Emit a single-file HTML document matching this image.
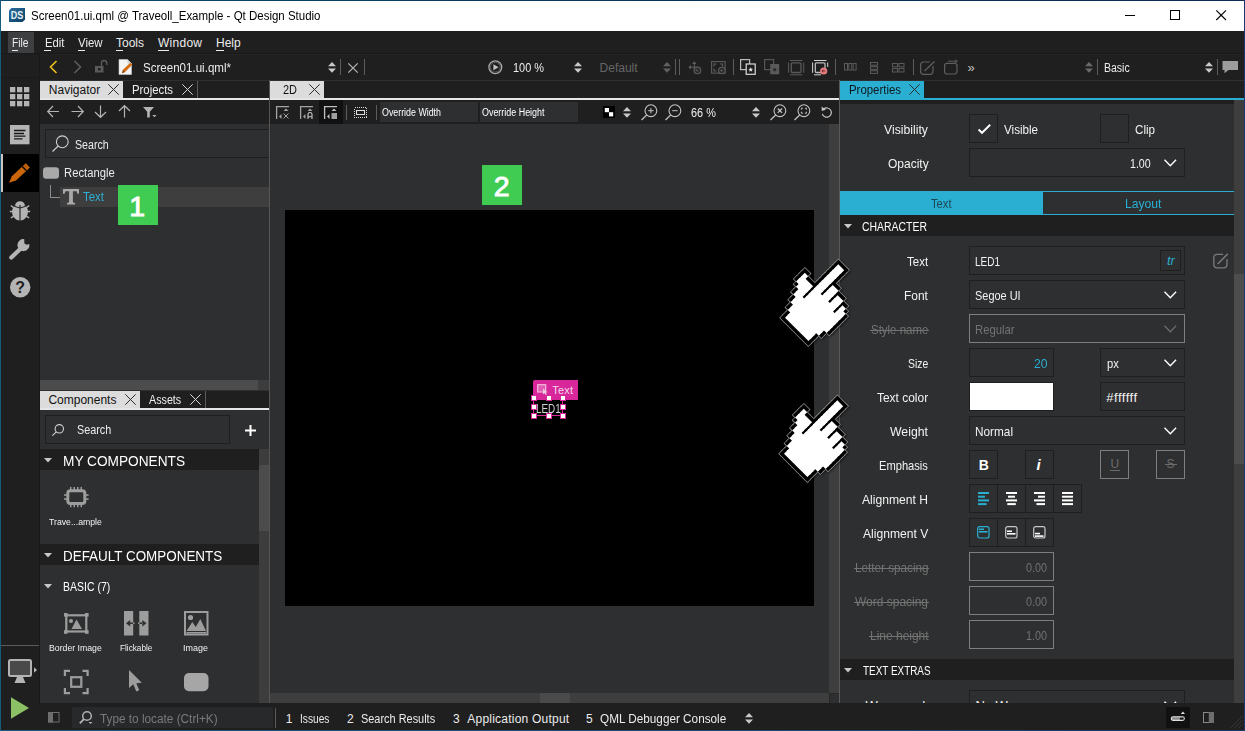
<!DOCTYPE html>
<html lang="en"><head><meta charset="utf-8"><title>Screen01.ui.qml @ Traveoll_Example - Qt Design Studio</title>
<style>
*{box-sizing:border-box;margin:0;padding:0}
html,body{width:1245px;height:731px;overflow:hidden;background:#1f1f1f}
body{position:relative;font-family:"Liberation Sans","DejaVu Sans",sans-serif;font-size:12px;color:#ececec}
.a{position:absolute}
.t{position:absolute;white-space:nowrap;line-height:1}
svg{position:absolute;overflow:visible}
</style></head>
<body>
<div class="a" style="left:0px;top:0px;width:1245px;height:731px;background:#1f1f1f;"></div>
<div class="a" style="left:1px;top:1px;width:1243px;height:30px;background:#ffffff;"></div>
<svg style="left:9px;top:8px;" width="16" height="14" viewBox="0 0 16 14"><defs><linearGradient id="dsg" x1="0" y1="0" x2="1" y2="1"><stop offset="0" stop-color="#2a6f9e"/><stop offset="1" stop-color="#0b3f63"/></linearGradient></defs><path d="M2.5 0H16V11.5L13.5 14H0V2.5Z" fill="url(#dsg)"/><text x="8" y="11" font-family="Liberation Sans, sans-serif" font-weight="700" font-size="10.500" text-anchor="middle" fill="#e8f1f7" textLength="12.500" lengthAdjust="spacingAndGlyphs">DS</text></svg>
<div class="t" style="left:30.50px;top:10.00px;font-size:12px;line-height:1;transform:scaleX(0.9576);transform-origin:0 0;color:#000;">Screen01.ui.qml @ Traveoll_Example - Qt Design Studio</div>
<svg style="left:1125px;top:9px;" width="12" height="12" viewBox="0 0 12 12"><path d="M0 6.5H10" stroke="#000" stroke-width="1" fill="none"/></svg>
<svg style="left:1170px;top:9px;" width="12" height="12" viewBox="0 0 12 12"><rect x="0.5" y="1.5" width="9" height="9" stroke="#000" stroke-width="1" fill="none"/></svg>
<svg style="left:1216px;top:9px;" width="12" height="12" viewBox="0 0 12 12"><path d="M0.3 1.3L10 11M10 1.3L0.3 11" stroke="#000" stroke-width="1.1" fill="none"/></svg>
<div class="a" style="left:8px;top:32px;width:26px;height:21px;background:#3e3f40;"></div>
<div class="t" style="left:12.30px;top:37.00px;font-size:12px;line-height:1;transform:scaleX(0.8534);transform-origin:0 0;color:#ececec;">File</div>
<div class="a" style="left:12px;top:50px;width:5.5px;height:1px;background:#ececec;"></div>
<div class="t" style="left:44.50px;top:37.00px;font-size:12px;line-height:1;transform:scaleX(0.9431);transform-origin:0 0;color:#ececec;">Edit</div>
<div class="a" style="left:44px;top:50px;width:6.5px;height:1px;background:#ececec;"></div>
<div class="t" style="left:78.00px;top:37.00px;font-size:12px;line-height:1;transform:scaleX(0.9499);transform-origin:0 0;color:#ececec;">View</div>
<div class="a" style="left:78px;top:50px;width:7px;height:1px;background:#ececec;"></div>
<div class="t" style="left:116.00px;top:37.00px;font-size:12px;line-height:1;color:#ececec;">Tools</div>
<div class="a" style="left:116px;top:50px;width:6.5px;height:1px;background:#ececec;"></div>
<div class="t" style="left:158.00px;top:37.00px;font-size:12px;line-height:1;letter-spacing:0.264px;color:#ececec;">Window</div>
<div class="a" style="left:158px;top:50px;width:10.5px;height:1px;background:#ececec;"></div>
<div class="t" style="left:216.00px;top:37.00px;font-size:12px;line-height:1;color:#ececec;">Help</div>
<div class="a" style="left:216px;top:50px;width:8px;height:1px;background:#ececec;"></div>
<div class="a" style="left:1px;top:53px;width:1243px;height:1px;background:#191919;"></div>
<div class="a" style="left:40px;top:54px;width:1204px;height:1px;background:#232323;"></div>
<div class="a" style="left:40px;top:80px;width:1204px;height:1px;background:#242424;"></div>
<svg style="left:49px;top:60px;" width="9" height="14" viewBox="0 0 9 14"><path d="M7.5 1L1.5 7L7.5 13" stroke="#edc11a" stroke-width="1.6" fill="none"/></svg>
<svg style="left:73px;top:60px;" width="9" height="14" viewBox="0 0 9 14"><path d="M1.5 1L7.5 7L1.5 13" stroke="#5e5e5e" stroke-width="1.6" fill="none"/></svg>
<svg style="left:95px;top:60px;" width="14" height="13" viewBox="0 0 14 13"><rect x="0" y="6" width="8.5" height="6.5" fill="#5a5a5a"/><rect x="3" y="8" width="2.5" height="2.5" fill="#1f1f1f"/><path d="M6.5 6V3.2A2.6 2.6 0 0 1 11.8 3.2V5" stroke="#5a5a5a" stroke-width="1.4" fill="none"/></svg>
<svg style="left:118px;top:59px;" width="16" height="17" viewBox="0 0 16 17"><path d="M1 0.5H9.5L13.5 4.5V15.5H1Z" fill="#f4f4f4" stroke="#c9c9c9" stroke-width="0.6"/><path d="M9.5 0.5V4.5H13.5" fill="#d0d0d0"/><path d="M4 14.2L5 10.8L12.3 3.8L14.2 5.7L7 12.9Z" fill="#d2690e"/><path d="M4 14.2L5 10.8L7 12.9Z" fill="#8a4a10"/></svg>
<div class="t" style="left:143.00px;top:62.00px;font-size:12px;line-height:1;transform:scaleX(0.9630);transform-origin:0 0;color:#ececec;">Screen01.ui.qml*</div>
<svg style="left:327.5px;top:61.6px;" width="8" height="11" viewBox="0 0 8 11"><path d="M0 4.2L4 0L8 4.2Z M0 6.6L4 10.8L8 6.6Z" fill="#c8c8c8"/></svg>
<div class="a" style="left:340px;top:59px;width:1px;height:16px;background:#5c5c5c;"></div>
<svg style="left:347.5px;top:62.5px;" width="10" height="10" viewBox="0 0 10 10"><path d="M0.3 0.3L9.7 9.7M9.7 0.3L0.3 9.7" stroke="#b8b8b8" stroke-width="1.2" fill="none"/></svg>
<div class="a" style="left:364px;top:59px;width:1px;height:16px;background:#5c5c5c;"></div>
<svg style="left:487.5px;top:60px;" width="15" height="15" viewBox="0 0 15 15"><circle cx="7.3" cy="7.2" r="6.4" stroke="#a8a8a8" stroke-width="1.3" fill="none"/><circle cx="7.3" cy="7.2" r="4.9" fill="none" stroke="#6a6a6a" stroke-width="0.8"/><path d="M5.4 4.2L10.6 7.2L5.4 10.2Z" fill="#c0c0c0"/></svg>
<div class="t" style="left:512.70px;top:62.00px;font-size:12px;line-height:1;transform:scaleX(0.9111);transform-origin:0 0;color:#ececec;">100 %</div>
<svg style="left:574.3px;top:61.6px;" width="8" height="11" viewBox="0 0 8 11"><path d="M0 4.2L4 0L8 4.2Z M0 6.6L4 10.8L8 6.6Z" fill="#c8c8c8"/></svg>
<div class="t" style="left:599.60px;top:62.00px;font-size:12px;line-height:1;color:#666;">Default</div>
<svg style="left:662.5px;top:61.6px;" width="8" height="11" viewBox="0 0 8 11"><path d="M0 4.2L4 0L8 4.2Z M0 6.6L4 10.8L8 6.6Z" fill="#606060"/></svg>
<div class="a" style="left:675px;top:59px;width:1px;height:16px;background:#5c5c5c;"></div>
<div class="a" style="left:679px;top:59px;width:1px;height:16px;background:#5c5c5c;"></div>
<svg style="left:688px;top:61px;" width="14" height="13" viewBox="0 0 14 13"><path d="M6.300 0.300L8.600 3H4Z M0.300 6.300L3 4V8.600Z" fill="#5c5c5c"/><path d="M6.300 2V10M2 6.300H9" stroke="#5c5c5c" stroke-width="1.100" fill="none"/><circle cx="9.4" cy="9.4" r="3.300" fill="#2a2a2a" stroke="#5c5c5c" stroke-width="1.100"/><path d="M8 9.4h2.600M8 9.4l1.300 -1.300M8 9.4l1.300 1.300" stroke="#5c5c5c" stroke-width=".800" fill="none"/></svg>
<svg style="left:710.5px;top:61px;" width="15" height="13" viewBox="0 0 15 13"><rect x="0.600" y="0.600" width="13.500" height="11.500" fill="none" stroke="#5c5c5c" stroke-width="1.100"/><path d="M3 5.500V3H5.500M9 3H11.500V5.500M3 7.500V10H5.500" stroke="#5c5c5c" stroke-width="1.100" fill="none"/><circle cx="10.9" cy="9.5" r="3.300" fill="#2a2a2a" stroke="#5c5c5c" stroke-width="1.100"/><path d="M9.5 9.5h2.600M9.5 9.5l1.300 -1.300M9.5 9.5l1.300 1.300" stroke="#5c5c5c" stroke-width=".800" fill="none"/></svg>
<div class="a" style="left:733px;top:59px;width:1px;height:16px;background:#5c5c5c;"></div>
<svg style="left:740px;top:59px;" width="16" height="16" viewBox="0 0 16 16"><rect x="0.6" y="0.6" width="9" height="10" fill="none" stroke="#bdbdbd" stroke-width="1.2"/><rect x="6.2" y="5" width="9" height="10.3" fill="#1f1f1f" stroke="#dcdcdc" stroke-width="1.2"/><path d="M10.7 8.2l.7 1.6 1.7.1-1.3 1.1.4 1.7-1.5-.9-1.5.9.4-1.7-1.3-1.1 1.7-.1z" fill="#e6e6e6"/></svg>
<svg style="left:764px;top:59px;" width="16" height="16" viewBox="0 0 16 16"><rect x="0.6" y="0.6" width="9" height="10" fill="none" stroke="#555" stroke-width="1.2"/><rect x="6.2" y="5" width="9" height="10.3" fill="#5a5a5a"/><path d="M10.7 8.2l.7 1.6 1.7.1-1.3 1.1.4 1.7-1.5-.9-1.5.9.4-1.7-1.3-1.1 1.7-.1z" fill="#2a2a2a"/></svg>
<svg style="left:787.5px;top:59.5px;" width="16" height="15" viewBox="0 0 16 15"><rect x="3.300" y="2.800" width="9.700" height="9.700" rx="1" fill="none" stroke="#5a5a5a" stroke-width="1.300"/><path d="M2 0.500H14.500M2 14.800H14.500M0.600 2.500V12.800M15.700 2.500V12.800" stroke="#5a5a5a" stroke-width="1" fill="none"/></svg>
<svg style="left:812px;top:59.5px;" width="16" height="15" viewBox="0 0 16 15"><rect x="3.300" y="2.800" width="9.700" height="9.700" rx="1" fill="none" stroke="#bcbcbc" stroke-width="1.300"/><path d="M2 0.500H14.500M2 14.800H9M0.600 2.500V12.800M15.700 2.500V7" stroke="#d4d4d4" stroke-width="1" fill="none"/><circle cx="11.700" cy="11" r="3.600" fill="#e57c7f"/><path d="M10 11h3.300M10 11l1.300 -1.300M10 11l1.300 1.300" stroke="#5a1f22" stroke-width=".800" fill="none"/></svg>
<div class="a" style="left:835px;top:59px;width:1px;height:16px;background:#5c5c5c;"></div>
<svg style="left:844px;top:63px;" width="13" height="8" viewBox="0 0 13 8"><rect x="0.5" y="0.5" width="3" height="6.5" fill="none" stroke="#5a5a5a"/><rect x="4.8" y="0.5" width="3" height="6.5" fill="none" stroke="#5a5a5a"/><rect x="9.1" y="0.5" width="3" height="6.5" fill="none" stroke="#5a5a5a"/></svg>
<svg style="left:869.5px;top:61.5px;" width="8" height="12" viewBox="0 0 8 12"><rect x="0.5" y="0.5" width="7" height="2.7" fill="none" stroke="#5a5a5a"/><rect x="0.5" y="4.6" width="7" height="2.7" fill="none" stroke="#5a5a5a"/><rect x="0.5" y="8.7" width="7" height="2.7" fill="none" stroke="#5a5a5a"/></svg>
<svg style="left:892px;top:62.5px;" width="13" height="10" viewBox="0 0 13 10"><rect x="0.5" y="0.5" width="5" height="3.4" fill="none" stroke="#5a5a5a"/><rect x="7" y="0.5" width="5" height="3.4" fill="none" stroke="#5a5a5a"/><rect x="0.5" y="5.6" width="5" height="3.4" fill="none" stroke="#5a5a5a"/><rect x="7" y="5.6" width="5" height="3.4" fill="none" stroke="#5a5a5a"/></svg>
<div class="a" style="left:913px;top:59px;width:1px;height:16px;background:#5c5c5c;"></div>
<svg style="left:920px;top:60.5px;" width="16" height="14" viewBox="0 0 16 14"><path d="M10 1H3.5A3 3 0 0 0 .6 4V10.5A3 3 0 0 0 3.5 13.4H10A3 3 0 0 0 13 10.5V5" stroke="#5e5e5e" stroke-width="1.2" fill="none"/><path d="M4.5 10L14.5 0.5" stroke="#5e5e5e" stroke-width="1.3"/></svg>
<svg style="left:944px;top:60px;" width="15" height="15" viewBox="0 0 15 15"><path d="M0.6 5V11.5A2.5 2.5 0 0 0 3.1 14H10.5A2.5 2.5 0 0 0 13 11.500V5A2.500 2.500 0 0 0 10.5 3.4H3.1A2.500 2.500 0 0 0 .6 5Z" stroke="#5e5e5e" stroke-width="1.2" fill="none"/><path d="M4 1.2H13M11 0L13.500 1.2L11 2.600" stroke="#5e5e5e" stroke-width="1" fill="none"/></svg>
<div class="t" style="left:967.50px;top:61.00px;font-size:13px;line-height:1;color:#c0c0c0;">»</div>
<svg style="left:1084.5px;top:61.6px;" width="8" height="11" viewBox="0 0 8 11"><path d="M0 4.2L4 0L8 4.2Z M0 6.6L4 10.8L8 6.6Z" fill="#6a6a6a"/></svg>
<div class="a" style="left:1097px;top:59px;width:1px;height:16px;background:#5c5c5c;"></div>
<div class="t" style="left:1103.70px;top:62.00px;font-size:12px;line-height:1;transform:scaleX(0.8758);transform-origin:0 0;color:#ececec;">Basic</div>
<svg style="left:1204.6px;top:61.6px;" width="8" height="11" viewBox="0 0 8 11"><path d="M0 4.2L4 0L8 4.2Z M0 6.6L4 10.8L8 6.6Z" fill="#c8c8c8"/></svg>
<div class="a" style="left:1217px;top:59px;width:1px;height:16px;background:#5c5c5c;"></div>
<svg style="left:1222px;top:60.5px;" width="17" height="13" viewBox="0 0 17 13"><path d="M0.500 0H16V9H6.500L2.500 12.200V9H0.500Z" fill="#9c9c9c"/></svg>
<div class="a" style="left:1px;top:54px;width:39px;height:676px;background:#1f1f1f;"></div>
<svg style="left:10px;top:87px;" width="20" height="20" viewBox="0 0 20 20"><rect x="0" y="0" width="5.3" height="5.3" fill="#b4b4b4"/><rect x="7" y="0" width="5.3" height="5.3" fill="#b4b4b4"/><rect x="14" y="0" width="5.3" height="5.3" fill="#b4b4b4"/><rect x="0" y="7" width="5.3" height="5.3" fill="#b4b4b4"/><rect x="7" y="7" width="5.3" height="5.3" fill="#b4b4b4"/><rect x="14" y="7" width="5.3" height="5.3" fill="#b4b4b4"/><rect x="0" y="14" width="5.3" height="5.3" fill="#b4b4b4"/><rect x="7" y="14" width="5.3" height="5.3" fill="#b4b4b4"/><rect x="14" y="14" width="5.3" height="5.3" fill="#b4b4b4"/></svg>
<svg style="left:10px;top:125px;" width="20" height="20" viewBox="0 0 20 20"><rect x="0" y="0" width="19.5" height="19.3" fill="#b4b4b4"/><path d="M4 5.500H15.500M4 8.500H14M4 11.200H15.500M4 13.800H12.500" stroke="#161616" stroke-width="1.300"/></svg>
<div class="a" style="left:1px;top:154px;width:38px;height:38px;background:#000;"></div>
<div class="a" style="left:39px;top:54px;width:1px;height:650px;background:#191919;"></div>
<div class="a" style="left:1px;top:77px;width:38px;height:1px;background:#1a1a1a;"></div>
<div class="a" style="left:1px;top:154px;width:2px;height:38px;background:#c8c6c5;"></div>
<svg style="left:8px;top:162px;" width="23" height="22" viewBox="0 0 23 22"><path d="M1 20.800L3.800 14.300L16.200 2.700L20.400 6.900L8 18.600Z" fill="#c9650b"/><path d="M14.300 4.500L18.500 8.700" stroke="#000" stroke-width="1.300"/><path d="M16.200 2.700L17.700 1.300L21.900 5.500L20.400 6.900Z" fill="#c9650b"/></svg>
<svg style="left:9px;top:200px;" width="22" height="21" viewBox="0 0 22 21"><ellipse cx="11" cy="12" rx="8" ry="8.600" fill="#b4b4b4"/><path d="M6.200 5A4.900 4.600 0 0 1 15.800 5Z" fill="#b4b4b4"/><path d="M11 5V20.800" stroke="#1f1f1f" stroke-width="1.100"/><path d="M5.200 6.300L11 8L16.800 6.300" stroke="#1f1f1f" stroke-width="1" fill="none"/><path d="M0.800 11.500H4M18 11.500H21.200M1.800 5.500L5 8M20.200 5.500L17 8M1.800 18L5 15.800M20.200 18L17 15.800" stroke="#b4b4b4" stroke-width="1.500"/></svg>
<svg style="left:9px;top:239px;" width="22" height="21" viewBox="0 0 22 21"><path d="M2.300 18.500L12.500 8.800" stroke="#b4b4b4" stroke-width="4.200" stroke-linecap="round"/><path d="M20.300 5A6 6 0 1 1 15.300 0.200L15.300 4.300L17.500 5.800L20.300 5Z" fill="#b4b4b4"/></svg>
<svg style="left:9.8px;top:276.6px;" width="21" height="21" viewBox="0 0 21 21"><circle cx="10.200" cy="10.200" r="10.200" fill="#b4b4b4"/><text x="10.200" y="15.800" text-anchor="middle" font-family="Liberation Sans, sans-serif" font-weight="700" font-size="16" fill="#1f1f1f">?</text></svg>
<div class="a" style="left:1px;top:645px;width:38px;height:1px;background:#5a5a5a;"></div>
<svg style="left:8px;top:659px;" width="30" height="25" viewBox="0 0 30 25"><rect x="1" y="1" width="22" height="16" rx="1.500" fill="#4a4a4a" stroke="#b4b4b4" stroke-width="2"/><path d="M9 18H15L17.500 24H6.500Z" fill="#b4b4b4"/><path d="M26 8.300L29 11L26 13.700Z" fill="#b4b4b4"/></svg>
<svg style="left:10.8px;top:697px;" width="18" height="22" viewBox="0 0 18 22"><path d="M0 0.300L18 11L0 21.700Z" fill="#8cc166"/></svg>
<div class="a" style="left:40px;top:80px;width:229px;height:310px;background:#2e2f30;"></div>
<div class="a" style="left:40px;top:81px;width:229px;height:18px;background:#1f1f1f;"></div>
<div class="a" style="left:40px;top:98px;width:229px;height:2px;background:#e6e6e6;"></div>
<div class="a" style="left:40px;top:81px;width:83px;height:17px;background:#dcdcdc;"></div>
<div class="t" style="left:48.80px;top:84.00px;font-size:12px;line-height:1;color:#111;">Navigator</div>
<svg style="left:108.3px;top:83.7px;" width="11" height="11" viewBox="0 0 11 11"><path d="M0.300 0.300L10.700 10.700M10.700 0.300L0.300 10.700" stroke="#2c2c2c" stroke-width="1" fill="none"/></svg>
<div class="a" style="left:197px;top:81px;width:1px;height:17px;background:#5a5a5a;"></div>
<div class="t" style="left:132.40px;top:84.00px;font-size:12px;line-height:1;transform:scaleX(0.9459);transform-origin:0 0;color:#f0f0f0;">Projects</div>
<svg style="left:182px;top:83.7px;" width="11" height="11" viewBox="0 0 11 11"><path d="M0.300 0.300L10.700 10.700M10.700 0.300L0.300 10.700" stroke="#d8d8d8" stroke-width="1" fill="none"/></svg>
<div class="a" style="left:40px;top:100px;width:229px;height:24px;background:#1f1f1f;"></div>
<svg style="left:47px;top:105px;" width="13" height="13" viewBox="0 0 13 13"><path d="M12 6.500H1M6 1L0.700 6.500L6 12" stroke="#b4b4b4" stroke-width="1.200" fill="none"/></svg>
<svg style="left:70.5px;top:105px;" width="13" height="13" viewBox="0 0 13 13"><path d="M0.500 6.500H12M7 1L12.300 6.500L7 12" stroke="#b4b4b4" stroke-width="1.200" fill="none"/></svg>
<svg style="left:94px;top:105px;" width="13" height="13" viewBox="0 0 13 13"><path d="M6.500 0.500V12M1 7L6.500 12.300L12 7" stroke="#b4b4b4" stroke-width="1.200" fill="none"/></svg>
<svg style="left:118px;top:105px;" width="13" height="13" viewBox="0 0 13 13"><path d="M6.500 12.500V1M1 6L6.500 0.700L12 6" stroke="#b4b4b4" stroke-width="1.200" fill="none"/></svg>
<svg style="left:142.5px;top:107px;" width="14" height="11" viewBox="0 0 14 11"><path d="M0 0H11L6.800 4.800V10.500H4.200V4.800Z" fill="#b4b4b4"/><path d="M9.300 8H13.500L11.400 10.300Z" fill="#b4b4b4"/></svg>
<div class="a" style="left:45px;top:129px;width:224px;height:29px;background:#2e2f30;border:1px solid #1f1f20;border-right:0;"></div>
<svg style="left:51.5px;top:134.5px;" width="18" height="17" viewBox="0 0 18 17"><circle cx="10.300" cy="6.800" r="5.900" stroke="#d0d0d0" stroke-width="1.100" fill="none"/><path d="M6.200 11L0.500 16.500" stroke="#d0d0d0" stroke-width="1.100"/></svg>
<div class="t" style="left:74.70px;top:138.75px;font-size:12.5px;line-height:1;transform:scaleX(0.8509);transform-origin:0 0;color:#ececec;">Search</div>
<svg style="left:43px;top:167px;" width="16" height="12" viewBox="0 0 16 12"><rect x="0" y="0.200" width="16" height="11.600" rx="3.200" fill="#a9a9a9"/></svg>
<div class="t" style="left:63.50px;top:166.75px;font-size:12.5px;line-height:1;transform:scaleX(0.9008);transform-origin:0 0;color:#ececec;">Rectangle</div>
<div class="a" style="left:50px;top:185px;width:1px;height:13px;background:#8c8c8c;"></div>
<div class="a" style="left:50px;top:197px;width:10px;height:1px;background:#8c8c8c;"></div>
<div class="a" style="left:60px;top:187px;width:209px;height:20px;background:#3e3e3e;"></div>
<svg style="left:63px;top:189px;" width="16" height="16" viewBox="0 0 16 16"><path d="M0 0H16V4.800H14.400L13.600 2.300H9.900V13.300L12 14V15.600H4V14L6.100 13.300V2.300H2.400L1.600 4.800H0Z" fill="#a9a9a9"/></svg>
<div class="t" style="left:83.40px;top:190.75px;font-size:12.5px;line-height:1;transform:scaleX(0.9074);transform-origin:0 0;color:#2aafd3;">Text</div>
<div class="a" style="left:118px;top:185px;width:40px;height:40px;background:#40cb52;"></div>
<div class="t" style="left:129.28px;top:191.75px;font-size:28.5px;line-height:1;color:#fff;-webkit-text-stroke:0.9px #fff;">1</div>
<div class="a" style="left:40px;top:380px;width:229px;height:10px;background:#3d3d3d;"></div>
<div class="a" style="left:40px;top:380px;width:218px;height:10px;background:#4c4c4c;"></div>
<div class="a" style="left:40px;top:390px;width:229px;height:313px;background:#2e2f30;"></div>
<div class="a" style="left:40px;top:391px;width:229px;height:18px;background:#1f1f1f;"></div>
<div class="a" style="left:40px;top:408px;width:229px;height:2px;background:#e6e6e6;"></div>
<div class="a" style="left:40px;top:391px;width:100px;height:17px;background:#dcdcdc;"></div>
<div class="t" style="left:48.40px;top:394.00px;font-size:12px;line-height:1;color:#111;">Components</div>
<svg style="left:125.3px;top:393.7px;" width="11" height="11" viewBox="0 0 11 11"><path d="M0.300 0.300L10.700 10.700M10.700 0.300L0.300 10.700" stroke="#2c2c2c" stroke-width="1" fill="none"/></svg>
<div class="a" style="left:205px;top:391px;width:1px;height:17px;background:#5a5a5a;"></div>
<div class="t" style="left:149.00px;top:394.00px;font-size:12px;line-height:1;transform:scaleX(0.8942);transform-origin:0 0;color:#f0f0f0;">Assets</div>
<svg style="left:190.2px;top:393.7px;" width="11" height="11" viewBox="0 0 11 11"><path d="M0.300 0.300L10.700 10.700M10.700 0.300L0.300 10.700" stroke="#d8d8d8" stroke-width="1" fill="none"/></svg>
<div class="a" style="left:45px;top:415px;width:185px;height:29px;background:#2e2f30;border:1px solid #1f1f20;"></div>
<svg style="left:52px;top:424px;" width="12" height="12" viewBox="0 0 12 12"><circle cx="7.300" cy="4.800" r="4.200" stroke="#d0d0d0" stroke-width="1.100" fill="none"/><path d="M4.300 7.800L0.400 11.700" stroke="#d0d0d0" stroke-width="1.100"/></svg>
<div class="t" style="left:77.10px;top:423.75px;font-size:12.5px;line-height:1;transform:scaleX(0.8636);transform-origin:0 0;color:#ececec;">Search</div>
<svg style="left:244.5px;top:425px;" width="11" height="11" viewBox="0 0 11 11"><path d="M5.500 0V11M0 5.500H11" stroke="#fff" stroke-width="2"/></svg>
<div class="a" style="left:40px;top:449px;width:219px;height:21px;background:#1f1f1f;"></div>
<svg style="left:44.3px;top:457.8px;" width="8" height="5" viewBox="0 0 8 5"><path d="M0 0H8L4 4.600Z" fill="#c8c8c8"/></svg>
<div class="t" style="left:62.50px;top:454.00px;font-size:14px;line-height:1;transform:scaleX(0.9762);transform-origin:0 0;color:#fff;">MY COMPONENTS</div>
<div class="a" style="left:259px;top:449px;width:10px;height:254px;background:#3d3d3d;"></div>
<div class="a" style="left:259px;top:465px;width:10px;height:65.5px;background:#4c4c4c;"></div>
<svg style="left:63.7px;top:487px;" width="25" height="21" viewBox="0 0 25 21"><rect x="3.800" y="3.800" width="17" height="12.600" rx="2.500" fill="none" stroke="#9d9d9d" stroke-width="3"/><rect x="6.0" y="0" width="1.500" height="3" fill="#9d9d9d"/><rect x="6.0" y="17.200" width="1.500" height="3" fill="#9d9d9d"/><rect x="9.5" y="0" width="1.500" height="3" fill="#9d9d9d"/><rect x="9.5" y="17.200" width="1.500" height="3" fill="#9d9d9d"/><rect x="13.0" y="0" width="1.500" height="3" fill="#9d9d9d"/><rect x="13.0" y="17.200" width="1.500" height="3" fill="#9d9d9d"/><rect x="16.5" y="0" width="1.500" height="3" fill="#9d9d9d"/><rect x="16.5" y="17.200" width="1.500" height="3" fill="#9d9d9d"/><rect x="0" y="7.3" width="3" height="1.500" fill="#9d9d9d"/><rect x="21.600" y="7.3" width="3" height="1.500" fill="#9d9d9d"/><rect x="0" y="11.3" width="3" height="1.500" fill="#9d9d9d"/><rect x="21.600" y="11.3" width="3" height="1.500" fill="#9d9d9d"/></svg>
<div class="t" style="left:49.40px;top:516.75px;font-size:9.5px;line-height:1;transform:scaleX(0.9148);transform-origin:0 0;color:#f2f2f2;">Trave...ample</div>
<div class="a" style="left:40px;top:544px;width:219px;height:21px;background:#1f1f1f;"></div>
<svg style="left:44.3px;top:552.5px;" width="8" height="5" viewBox="0 0 8 5"><path d="M0 0H8L4 4.600Z" fill="#c8c8c8"/></svg>
<div class="t" style="left:62.50px;top:549.00px;font-size:14px;line-height:1;transform:scaleX(0.9593);transform-origin:0 0;color:#fff;">DEFAULT COMPONENTS</div>
<svg style="left:44.3px;top:584px;" width="8" height="5" viewBox="0 0 8 5"><path d="M0 0H8L4 4.600Z" fill="#c8c8c8"/></svg>
<div class="t" style="left:62.50px;top:581.00px;font-size:12px;line-height:1;transform:scaleX(0.8739);transform-origin:0 0;color:#fff;">BASIC (7)</div>
<svg style="left:63.7px;top:612.6px;" width="25" height="21" viewBox="0 0 25 21"><rect x="2.300" y="2.300" width="20" height="16.200" fill="none" stroke="#9d9d9d" stroke-width="2.200"/><rect x="0" y="0" width="3.600" height="3.600" fill="#9d9d9d"/><rect x="21" y="0" width="3.600" height="3.600" fill="#9d9d9d"/><rect x="0" y="17.2" width="3.600" height="3.600" fill="#9d9d9d"/><rect x="21" y="17.2" width="3.600" height="3.600" fill="#9d9d9d"/><circle cx="7" cy="8" r="2" fill="#9d9d9d"/><path d="M7.500 16L12.500 6.500L18 16Z" fill="#9d9d9d"/></svg>
<svg style="left:124px;top:610.8px;" width="25" height="25" viewBox="0 0 25 25"><rect x="0" y="0" width="9.200" height="24.500" fill="#9d9d9d"/><rect x="15.300" y="0" width="9.200" height="24.500" fill="#9d9d9d"/><path d="M2 12.200L6.200 9V15.400Z M22.500 12.200L18.300 9V15.400Z" fill="#2e2f30"/><path d="M6 12.200H10.500M14 12.200H18.500" stroke="#9d9d9d" stroke-width="1.400"/><path d="M6 12.200H9M15.500 12.200H18.500" stroke="#2e2f30" stroke-width="1.400"/></svg>
<svg style="left:183.8px;top:610.8px;" width="25" height="25" viewBox="0 0 25 25"><rect x="1" y="1" width="22.500" height="22.500" fill="none" stroke="#9d9d9d" stroke-width="2"/><circle cx="6.500" cy="6.500" r="2.600" fill="#9d9d9d"/><path d="M2.500 20L8.300 11L11.800 16L16.300 8L22 20Z" fill="#9d9d9d"/><rect x="2.500" y="21" width="19.500" height="1.400" fill="#9d9d9d"/></svg>
<div class="t" style="left:49.40px;top:642.75px;font-size:9.5px;line-height:1;transform:scaleX(0.9174);transform-origin:0 0;color:#f2f2f2;">Border Image</div>
<div class="t" style="left:119.70px;top:642.75px;font-size:9.5px;line-height:1;transform:scaleX(0.8617);transform-origin:0 0;color:#f2f2f2;">Flickable</div>
<div class="t" style="left:183.40px;top:642.75px;font-size:9.5px;line-height:1;transform:scaleX(0.9431);transform-origin:0 0;color:#f2f2f2;">Image</div>
<svg style="left:63.7px;top:669.8px;" width="25" height="24" viewBox="0 0 25 24"><path d="M0.900 6V0.900H6M18.500 0.900H23.600V6M0.900 18V23.100H6M18.500 23.100H23.600V18" stroke="#9d9d9d" stroke-width="2.200" fill="none"/><rect x="7.200" y="7.200" width="10.100" height="9.600" fill="none" stroke="#9d9d9d" stroke-width="2.200"/></svg>
<svg style="left:129.4px;top:670.4px;" width="13" height="23" viewBox="0 0 13 23"><path d="M0 0V18L4.300 14.300L7.300 21.500L10.300 20.300L7.300 13.300L12.800 12.800Z" fill="#9d9d9d"/></svg>
<svg style="left:183.8px;top:672.8px;" width="25" height="19" viewBox="0 0 25 19"><rect x="0" y="0" width="24.500" height="18.300" rx="5" fill="#a6a6a6"/></svg>
<div class="a" style="left:269px;top:80px;width:1px;height:623px;background:#555555;"></div>
<div class="a" style="left:270px;top:80px;width:569px;height:623px;background:#2e2f30;"></div>
<div class="a" style="left:270px;top:81px;width:569px;height:18px;background:#1f1f1f;"></div>
<div class="a" style="left:270px;top:98px;width:569px;height:2px;background:#e6e6e6;"></div>
<div class="a" style="left:270px;top:81px;width:54px;height:17px;background:#dcdcdc;"></div>
<div class="t" style="left:282.50px;top:84.00px;font-size:12px;line-height:1;transform:scaleX(0.9127);transform-origin:0 0;color:#111;">2D</div>
<svg style="left:309px;top:83.7px;" width="11" height="11" viewBox="0 0 11 11"><path d="M0.300 0.300L10.700 10.700M10.700 0.300L0.300 10.700" stroke="#2c2c2c" stroke-width="1" fill="none"/></svg>
<div class="a" style="left:270px;top:100px;width:569px;height:24px;background:#1f1f1f;"></div>
<svg style="left:275.5px;top:106px;" width="14" height="13" viewBox="0 0 14 13"><path d="M0.600 13V0.600H13" stroke="#a4a4a4" stroke-width="1.300" fill="none"/><path d="M3 10.500L5.500 8V13Z" fill="#a4a4a4"/><path d="M10 2.500L7.500 5H12.500Z" fill="#a4a4a4"/><path d="M7.500 7.500L12.500 12.500M12.500 7.500L7.500 12.500" stroke="#a4a4a4" stroke-width="1"/></svg>
<svg style="left:299.5px;top:106px;" width="14" height="13" viewBox="0 0 14 13"><path d="M0.600 13V0.600H13" stroke="#a4a4a4" stroke-width="1.300" fill="none"/><path d="M3 10.500L5.500 8V13Z" fill="#a4a4a4"/><path d="M10 2.500L7.500 5H12.500Z" fill="#a4a4a4"/><path d="M8 13V8.500A2 2 0 0 1 12 8.500V13M8 10.800H12" stroke="#c8c8c8" stroke-width="1.100" fill="none"/></svg>
<div class="a" style="left:319px;top:100px;width:24px;height:24px;background:#111112;"></div>
<svg style="left:323.5px;top:106px;" width="14" height="13" viewBox="0 0 14 13"><path d="M0.600 13V0.600H13" stroke="#c0c0c0" stroke-width="1.300" fill="none"/><path d="M3 10.500L5.500 8V13Z" fill="#c0c0c0"/><path d="M10 2.500L7.500 5H12.500Z" fill="#c0c0c0"/><rect x="7.500" y="7" width="5.500" height="6" fill="#a0a0a0"/></svg>
<div class="a" style="left:346px;top:105px;width:1px;height:15px;background:#5c5c5c;"></div>
<svg style="left:354px;top:107px;" width="14" height="12" viewBox="0 0 14 12"><rect x="0.500" y="0.500" width="12" height="10" fill="none" stroke="#d8d8d8" stroke-width="1" stroke-dasharray="1 1" shape-rendering="crispEdges"/><rect x="2.500" y="3.500" width="8" height="4" fill="none" stroke="#e0e0e0" stroke-width="1" shape-rendering="crispEdges"/></svg>
<div class="a" style="left:376px;top:105px;width:1px;height:15px;background:#5c5c5c;"></div>
<div class="a" style="left:380px;top:102px;width:98px;height:20px;background:#2e2f30;"></div>
<div class="a" style="left:480px;top:102px;width:98px;height:20px;background:#2e2f30;"></div>
<div class="t" style="left:382.30px;top:107.50px;font-size:10px;line-height:1;transform:scaleX(0.8848);transform-origin:0 0;color:#fff;">Override Width</div>
<div class="t" style="left:482.30px;top:107.50px;font-size:10px;line-height:1;transform:scaleX(0.8925);transform-origin:0 0;color:#fff;">Override Height</div>
<svg style="left:603px;top:106px;" width="12" height="12" viewBox="0 0 12 12"><rect x="0" y="0" width="12" height="12" fill="#000"/><rect x="1.800" y="2" width="4.200" height="4.200" fill="#fff"/><rect x="6" y="6.200" width="4.200" height="4.200" fill="#fff"/></svg>
<svg style="left:623px;top:106.5px;" width="8" height="11" viewBox="0 0 8 11"><path d="M0 4.2L4 0L8 4.2Z M0 6.6L4 10.8L8 6.6Z" fill="#c8c8c8"/></svg>
<svg style="left:640.5px;top:104.5px;" width="17" height="16" viewBox="0 0 17 16"><circle cx="9.900" cy="5.700" r="5.900" stroke="#c4c4c4" stroke-width="1.100" fill="none"/><path d="M5.700 10L0.500 15" stroke="#c4c4c4" stroke-width="1.200"/><path d="M7.200 5.700H12.600M9.900 3V8.400" stroke="#c4c4c4" stroke-width="1"/></svg>
<svg style="left:664.5px;top:104.5px;" width="17" height="16" viewBox="0 0 17 16"><circle cx="9.900" cy="5.700" r="5.900" stroke="#c4c4c4" stroke-width="1.100" fill="none"/><path d="M5.700 10L0.500 15" stroke="#c4c4c4" stroke-width="1.200"/><path d="M7.200 5.700H12.600" stroke="#c4c4c4" stroke-width="1"/></svg>
<div class="t" style="left:690.50px;top:107.00px;font-size:12px;line-height:1;transform:scaleX(0.9067);transform-origin:0 0;color:#ececec;">66 %</div>
<svg style="left:752.4px;top:106.5px;" width="8" height="11" viewBox="0 0 8 11"><path d="M0 4.2L4 0L8 4.2Z M0 6.6L4 10.8L8 6.6Z" fill="#c8c8c8"/></svg>
<svg style="left:770px;top:104.5px;" width="17" height="16" viewBox="0 0 17 16"><circle cx="9.900" cy="5.700" r="5.900" stroke="#c4c4c4" stroke-width="1.100" fill="none"/><path d="M5.700 10L0.500 15" stroke="#c4c4c4" stroke-width="1.200"/><path d="M7.700 3.500L12.100 7.900M12.100 3.500L7.700 7.900" stroke="#c4c4c4" stroke-width="1.200"/><rect x="8.900" y="4.700" width="2" height="2" fill="#c4c4c4"/></svg>
<svg style="left:794px;top:104.5px;" width="17" height="16" viewBox="0 0 17 16"><circle cx="9.900" cy="5.700" r="5.900" stroke="#c4c4c4" stroke-width="1.100" fill="none"/><path d="M5.700 10L0.500 15" stroke="#c4c4c4" stroke-width="1.200"/><path d="M7.400 4.700V3.200H8.900M10.900 3.200H12.400V4.700M7.400 6.700V8.200H8.900M10.900 8.200H12.400V6.700" stroke="#c4c4c4" stroke-width="1" fill="none"/></svg>
<svg style="left:820.5px;top:106px;" width="12" height="12" viewBox="0 0 12 12"><path d="M2.600 3.200A4.600 4.600 0 1 1 1.300 7.800" stroke="#c4c4c4" stroke-width="1.200" fill="none"/><path d="M0.600 0.600L0.800 4.900L4.900 3.700Z" fill="#c4c4c4"/></svg>
<div class="a" style="left:829px;top:124px;width:10px;height:569px;background:#3e3e3e;"></div>
<div class="a" style="left:270px;top:693px;width:559px;height:10px;background:#3e3e3e;"></div>
<div class="a" style="left:540px;top:693px;width:30px;height:10px;background:#4a4a4a;"></div>
<div class="a" style="left:829px;top:693px;width:10px;height:10px;background:#2e2f30;border-top:1px solid #252626;border-left:1px solid #252626;"></div>
<div class="a" style="left:285px;top:210px;width:529px;height:396px;background:#000;"></div>
<div class="a" style="left:482px;top:165px;width:40px;height:40px;background:#40cb52;"></div>
<div class="t" style="left:493.68px;top:171.75px;font-size:28.5px;line-height:1;color:#fff;-webkit-text-stroke:0.9px #fff;">2</div>
<div class="a" style="left:533px;top:380px;width:45px;height:20px;background:#d8279a;border-radius:2px 0 0 0;"></div>
<svg style="left:536.5px;top:384px;" width="11" height="11" viewBox="0 0 11 11"><rect x="0.700" y="0.700" width="8" height="7.300" fill="rgba(255,255,255,.25)" stroke="#f0b9dc" stroke-width="1.200"/><path d="M6 4.500V10.500L7.600 9.200L8.800 11L9.800 10.400L8.800 8.600L10.500 8.300Z" fill="#eec6e0"/></svg>
<div class="t" style="left:552.30px;top:384.50px;font-size:11px;line-height:1;letter-spacing:0.176px;color:#f3d6e9;">Text</div>
<div class="t" style="left:535.90px;top:403.00px;font-size:12px;line-height:1;transform:scaleX(0.8229);transform-origin:0 0;color:#d4d4d4;">LED1</div>
<div class="a" style="left:533px;top:397px;width:30px;height:19px;border:1px solid #d8279a;"></div>
<div class="a" style="left:531px;top:395px;width:5.5px;height:5.5px;background:#fff;border:1px solid #d8279a;"></div>
<div class="a" style="left:531px;top:404px;width:5.5px;height:5.5px;background:#fff;border:1px solid #d8279a;"></div>
<div class="a" style="left:531px;top:413px;width:5.5px;height:5.5px;background:#fff;border:1px solid #d8279a;"></div>
<div class="a" style="left:546px;top:395px;width:5.5px;height:5.5px;background:#fff;border:1px solid #d8279a;"></div>
<div class="a" style="left:546px;top:413px;width:5.5px;height:5.5px;background:#fff;border:1px solid #d8279a;"></div>
<div class="a" style="left:560px;top:395px;width:5.5px;height:5.5px;background:#fff;border:1px solid #d8279a;"></div>
<div class="a" style="left:560px;top:404px;width:5.5px;height:5.5px;background:#fff;border:1px solid #d8279a;"></div>
<div class="a" style="left:560px;top:413px;width:5.5px;height:5.5px;background:#fff;border:1px solid #d8279a;"></div>
<div class="a" style="left:839px;top:80px;width:1px;height:623px;background:#5a5a5a;"></div>
<div class="a" style="left:840px;top:80px;width:404px;height:623px;background:#2e2f30;"></div>
<div class="a" style="left:840px;top:81px;width:404px;height:18px;background:#1f1f1f;"></div>
<div class="a" style="left:840px;top:98px;width:404px;height:2px;background:#2aafd3;"></div>
<div class="a" style="left:840px;top:81px;width:84px;height:17px;background:#2aafd3;"></div>
<div class="t" style="left:848.50px;top:84.00px;font-size:12px;line-height:1;transform:scaleX(0.9508);transform-origin:0 0;color:#0e181c;">Properties</div>
<svg style="left:909.2px;top:83.7px;" width="11" height="11" viewBox="0 0 11 11"><path d="M0.300 0.300L10.700 10.700M10.700 0.300L0.300 10.700" stroke="#2c2c2c" stroke-width="1" fill="none"/></svg>
<div class="a" style="left:840px;top:100px;width:394px;height:4px;background:#1f1f1f;"></div>
<div class="a" style="left:1234px;top:100px;width:10px;height:603px;background:#3e3e3e;"></div>
<div class="a" style="left:1234px;top:274px;width:10px;height:189.5px;background:#4d4d4d;"></div>
<div class="t" style="left:884.30px;top:123.00px;font-size:13px;line-height:1;transform:scaleX(0.9397);transform-origin:0 0;color:#f2f2f2;">Visibility</div>
<div class="a" style="left:969px;top:114px;width:29px;height:29px;background:#2e2f30;border:1px solid #1f1f20;"></div>
<svg style="left:977.5px;top:123.5px;" width="13" height="10" viewBox="0 0 13 10"><path d="M0.600 5.500L4 8.800L12.200 0.800" stroke="#fff" stroke-width="1.900" fill="none"/></svg>
<div class="t" style="left:1004.10px;top:123.00px;font-size:13px;line-height:1;transform:scaleX(0.8960);transform-origin:0 0;color:#f2f2f2;">Visible</div>
<div class="a" style="left:1100px;top:114px;width:29px;height:29px;background:#2e2f30;border:1px solid #1f1f20;"></div>
<div class="t" style="left:1135.00px;top:123.00px;font-size:13px;line-height:1;transform:scaleX(0.8931);transform-origin:0 0;color:#f2f2f2;">Clip</div>
<div class="t" style="left:887.50px;top:157.00px;font-size:13px;line-height:1;transform:scaleX(0.9235);transform-origin:0 0;color:#f2f2f2;">Opacity</div>
<div class="a" style="left:969px;top:148px;width:216px;height:29px;background:#2e2f30;border:1px solid #1f1f20;"></div>
<div class="t" style="left:1129.80px;top:157.00px;font-size:13px;line-height:1;transform:scaleX(0.8182);transform-origin:0 0;color:#f2f2f2;">1.00</div>
<svg style="left:1164px;top:159px;" width="13" height="8" viewBox="0 0 13 8"><path d="M0.500 0.700L6.300 6.700L12.100 0.700" stroke="#fff" stroke-width="1.350" fill="none"/></svg>
<div class="a" style="left:840px;top:191px;width:203px;height:24px;background:#2aafd3;"></div>
<div class="a" style="left:1043px;top:191px;width:191px;height:24px;background:#2e2f30;border-top:1px solid #2aafd3;border-bottom:1px solid #2aafd3;"></div>
<div class="t" style="left:930.80px;top:197.00px;font-size:13px;line-height:1;transform:scaleX(0.8599);transform-origin:0 0;color:#1f4654;">Text</div>
<div class="t" style="left:1124.55px;top:197.00px;font-size:13px;line-height:1;transform:scaleX(0.9352);transform-origin:0 0;color:#2aafd3;">Layout</div>
<div class="a" style="left:840px;top:215px;width:394px;height:21px;background:#1f1f1f;"></div>
<svg style="left:844.4px;top:224.3px;" width="8" height="5" viewBox="0 0 8 5"><path d="M0 0H8L4 4.600Z" fill="#c8c8c8"/></svg>
<div class="t" style="left:862.10px;top:220.75px;font-size:12.5px;line-height:1;transform:scaleX(0.8356);transform-origin:0 0;color:#fff;">CHARACTER</div>
<div class="t" style="left:907.10px;top:255.00px;font-size:13px;line-height:1;transform:scaleX(0.8850);transform-origin:0 0;color:#f2f2f2;">Text</div>
<div class="a" style="left:969px;top:246px;width:216px;height:29px;background:#2e2f30;border:1px solid #1f1f20;"></div>
<div class="t" style="left:975.40px;top:255.00px;font-size:13px;line-height:1;transform:scaleX(0.7688);transform-origin:0 0;color:#f2f2f2;">LED1</div>
<div class="a" style="left:1160px;top:250px;width:21px;height:21px;background:#2e2f30;border:1px solid #1f1f20;"></div>
<div class="t" style="left:1166.90px;top:254.00px;font-size:13px;line-height:1;color:#2aafd3;font-style:italic;">tr</div>
<svg style="left:1213px;top:252.5px;" width="16" height="16" viewBox="0 0 16 16"><path d="M10 1.300H3.800A3 3 0 0 0 .8 4.300V11.800A3 3 0 0 0 3.800 14.800H11A3 3 0 0 0 14 11.800V6" stroke="#7c7c7c" stroke-width="1.300" fill="none"/><path d="M4.800 11L14.800 0.800" stroke="#7c7c7c" stroke-width="1.500"/></svg>
<div class="t" style="left:904.30px;top:289.00px;font-size:13px;line-height:1;transform:scaleX(0.9189);transform-origin:0 0;color:#f2f2f2;">Font</div>
<div class="a" style="left:969px;top:280px;width:216px;height:29px;background:#2e2f30;border:1px solid #1f1f20;"></div>
<div class="t" style="left:975.40px;top:289.00px;font-size:13px;line-height:1;transform:scaleX(0.8413);transform-origin:0 0;color:#f2f2f2;">Segoe UI</div>
<svg style="left:1164px;top:291px;" width="13" height="8" viewBox="0 0 13 8"><path d="M0.500 0.700L6.300 6.700L12.100 0.700" stroke="#fff" stroke-width="1.350" fill="none"/></svg>
<div class="t" style="left:870.90px;top:323.00px;font-size:13px;line-height:1;transform:scaleX(0.8812);transform-origin:0 0;color:#737373;">Style name</div>
<div class="a" style="left:869.9000000000001px;top:329.5px;width:59.3px;height:1px;background:#737373;"></div>
<div class="a" style="left:969px;top:314px;width:216px;height:29px;background:#2e2f30;border:1px solid #7e7e7e;"></div>
<div class="t" style="left:975.40px;top:323.00px;font-size:13px;line-height:1;transform:scaleX(0.8699);transform-origin:0 0;color:#737373;">Regular</div>
<svg style="left:1164px;top:325px;" width="13" height="8" viewBox="0 0 13 8"><path d="M0.500 0.700L6.300 6.700L12.100 0.700" stroke="#6c6c6c" stroke-width="1.350" fill="none"/></svg>
<div class="t" style="left:908.00px;top:357.00px;font-size:13px;line-height:1;transform:scaleX(0.7988);transform-origin:0 0;color:#f2f2f2;">Size</div>
<div class="a" style="left:969px;top:348px;width:85px;height:29px;background:#2e2f30;border:1px solid #1f1f20;"></div>
<div class="t" style="left:1033.80px;top:357.00px;font-size:13px;line-height:1;transform:scaleX(0.9337);transform-origin:0 0;color:#2aafd3;">20</div>
<div class="a" style="left:1100px;top:348px;width:85px;height:29px;background:#2e2f30;border:1px solid #1f1f20;"></div>
<div class="t" style="left:1106.70px;top:357.00px;font-size:13px;line-height:1;transform:scaleX(0.8595);transform-origin:0 0;color:#f2f2f2;">px</div>
<svg style="left:1164px;top:359px;" width="13" height="8" viewBox="0 0 13 8"><path d="M0.500 0.700L6.300 6.700L12.100 0.700" stroke="#fff" stroke-width="1.350" fill="none"/></svg>
<div class="t" style="left:877.10px;top:391.00px;font-size:13px;line-height:1;transform:scaleX(0.9186);transform-origin:0 0;color:#f2f2f2;">Text color</div>
<div class="a" style="left:969px;top:382px;width:85px;height:29px;background:#fff;border:1px solid #1f1f20;"></div>
<div class="a" style="left:1100px;top:382px;width:85px;height:29px;background:#2e2f30;border:1px solid #1f1f20;"></div>
<div class="t" style="left:1106.30px;top:391.00px;font-size:13px;line-height:1;letter-spacing:0.497px;color:#f2f2f2;">#ffffff</div>
<div class="t" style="left:890.30px;top:425.00px;font-size:13px;line-height:1;transform:scaleX(0.9423);transform-origin:0 0;color:#f2f2f2;">Weight</div>
<div class="a" style="left:969px;top:416px;width:216px;height:29px;background:#2e2f30;border:1px solid #1f1f20;"></div>
<div class="t" style="left:975.40px;top:425.00px;font-size:13px;line-height:1;transform:scaleX(0.9071);transform-origin:0 0;color:#f2f2f2;">Normal</div>
<svg style="left:1164px;top:427px;" width="13" height="8" viewBox="0 0 13 8"><path d="M0.500 0.700L6.300 6.700L12.100 0.700" stroke="#fff" stroke-width="1.350" fill="none"/></svg>
<div class="t" style="left:879.30px;top:459.00px;font-size:13px;line-height:1;transform:scaleX(0.8568);transform-origin:0 0;color:#f2f2f2;">Emphasis</div>
<div class="a" style="left:969px;top:450px;width:29px;height:29px;background:#2e2f30;border:1px solid #1f1f20;"></div>
<div class="t" style="left:978.80px;top:458.00px;font-size:14px;line-height:1;color:#fff;font-weight:700;">B</div>
<div class="a" style="left:1025px;top:450px;width:29px;height:29px;background:#2e2f30;border:1px solid #1f1f20;"></div>
<div class="t" style="left:1036.50px;top:457.00px;font-size:15px;line-height:1;color:#fff;font-weight:700;font-style:italic;">i</div>
<div class="a" style="left:1100px;top:450px;width:29px;height:29px;background:#2e2f30;border:1px solid #7e7e7e;"></div>
<div class="t" style="left:1110.47px;top:458.00px;font-size:12px;line-height:1;color:#6c6c6c;">U</div>
<div class="a" style="left:1110px;top:470px;width:10px;height:1px;background:#6c6c6c;"></div>
<div class="a" style="left:1156px;top:450px;width:29px;height:29px;background:#2e2f30;border:1px solid #7e7e7e;"></div>
<div class="t" style="left:1166.60px;top:458.00px;font-size:12px;line-height:1;color:#6c6c6c;">S</div>
<div class="a" style="left:1164.5px;top:463.5px;width:12.5px;height:1px;background:#6c6c6c;"></div>
<div class="t" style="left:862.20px;top:493.00px;font-size:13px;line-height:1;transform:scaleX(0.9321);transform-origin:0 0;color:#f2f2f2;">Alignment H</div>
<div class="a" style="left:969px;top:484px;width:29px;height:29px;background:#2e2f30;border:1px solid #1f1f20;"></div>
<div class="a" style="left:997px;top:484px;width:29px;height:29px;background:#2e2f30;border:1px solid #1f1f20;"></div>
<div class="a" style="left:1025px;top:484px;width:29px;height:29px;background:#2e2f30;border:1px solid #1f1f20;"></div>
<div class="a" style="left:1053px;top:484px;width:29px;height:29px;background:#2e2f30;border:1px solid #1f1f20;"></div>
<svg style="left:978px;top:492px;" width="12" height="14" viewBox="0 0 12 14"><rect x="0" y="0.0" width="11" height="2" fill="#2aafd3"/><rect x="0" y="3.7" width="7" height="2" fill="#2aafd3"/><rect x="0" y="7.4" width="11" height="2" fill="#2aafd3"/><rect x="0" y="11.100000000000001" width="8.5" height="2" fill="#2aafd3"/></svg>
<svg style="left:1006px;top:492px;" width="12" height="14" viewBox="0 0 12 14"><rect x="0" y="0.0" width="11" height="2" fill="#fff"/><rect x="2" y="3.7" width="7" height="2" fill="#fff"/><rect x="0" y="7.4" width="11" height="2" fill="#fff"/><rect x="1.3" y="11.100000000000001" width="8.5" height="2" fill="#fff"/></svg>
<svg style="left:1034px;top:492px;" width="12" height="14" viewBox="0 0 12 14"><rect x="0" y="0.0" width="11" height="2" fill="#fff"/><rect x="4" y="3.7" width="7" height="2" fill="#fff"/><rect x="0" y="7.4" width="11" height="2" fill="#fff"/><rect x="2.5" y="11.100000000000001" width="8.5" height="2" fill="#fff"/></svg>
<svg style="left:1062px;top:492px;" width="12" height="14" viewBox="0 0 12 14"><rect x="0" y="0.0" width="11" height="2" fill="#fff"/><rect x="0" y="3.7" width="11" height="2" fill="#fff"/><rect x="0" y="7.4" width="11" height="2" fill="#fff"/><rect x="0" y="11.100000000000001" width="11" height="2" fill="#fff"/></svg>
<div class="t" style="left:863.00px;top:527.00px;font-size:13px;line-height:1;transform:scaleX(0.9303);transform-origin:0 0;color:#f2f2f2;">Alignment V</div>
<div class="a" style="left:969px;top:518px;width:29px;height:29px;background:#2e2f30;border:1px solid #1f1f20;"></div>
<div class="a" style="left:997px;top:518px;width:29px;height:29px;background:#2e2f30;border:1px solid #1f1f20;"></div>
<div class="a" style="left:1025px;top:518px;width:29px;height:29px;background:#2e2f30;border:1px solid #1f1f20;"></div>
<svg style="left:977px;top:526px;" width="13" height="13" viewBox="0 0 13 13"><rect x="0.700" y="0.700" width="11.300" height="11.300" rx="2" fill="none" stroke="#2aafd3" stroke-width="1.200"/><rect x="2" y="2.5" width="5" height="1.500" fill="#2aafd3"/><rect x="2" y="5.0" width="8.500" height="1.600" fill="#2aafd3"/></svg>
<svg style="left:1005px;top:526px;" width="13" height="13" viewBox="0 0 13 13"><rect x="0.700" y="0.700" width="11.300" height="11.300" rx="2" fill="none" stroke="#c8c8c8" stroke-width="1.200"/><rect x="2" y="4.5" width="5" height="1.500" fill="#fff"/><rect x="2" y="7.0" width="8.500" height="1.600" fill="#fff"/></svg>
<svg style="left:1033px;top:526px;" width="13" height="13" viewBox="0 0 13 13"><rect x="0.700" y="0.700" width="11.300" height="11.300" rx="2" fill="none" stroke="#c8c8c8" stroke-width="1.200"/><rect x="2" y="6.8" width="5" height="1.500" fill="#fff"/><rect x="2" y="9.3" width="8.500" height="1.600" fill="#fff"/></svg>
<div class="t" style="left:854.60px;top:561.00px;font-size:13px;line-height:1;transform:scaleX(0.9013);transform-origin:0 0;color:#737373;">Letter spacing</div>
<div class="a" style="left:853.6px;top:567.5px;width:75.6px;height:1px;background:#737373;"></div>
<div class="a" style="left:969px;top:552px;width:85px;height:29px;background:#2e2f30;border:1px solid #7e7e7e;"></div>
<div class="t" style="left:1026.20px;top:561.00px;font-size:13px;line-height:1;transform:scaleX(0.8301);transform-origin:0 0;color:#737373;">0.00</div>
<div class="t" style="left:855.20px;top:595.00px;font-size:13px;line-height:1;transform:scaleX(0.9213);transform-origin:0 0;color:#737373;">Word spacing</div>
<div class="a" style="left:854.2px;top:601.5px;width:75px;height:1px;background:#737373;"></div>
<div class="a" style="left:969px;top:586px;width:85px;height:29px;background:#2e2f30;border:1px solid #7e7e7e;"></div>
<div class="t" style="left:1026.20px;top:595.00px;font-size:13px;line-height:1;transform:scaleX(0.8301);transform-origin:0 0;color:#737373;">0.00</div>
<div class="t" style="left:869.60px;top:629.00px;font-size:13px;line-height:1;transform:scaleX(0.9213);transform-origin:0 0;color:#737373;">Line height</div>
<div class="a" style="left:868.6px;top:635.5px;width:60.6px;height:1px;background:#737373;"></div>
<div class="a" style="left:969px;top:620px;width:85px;height:29px;background:#2e2f30;border:1px solid #7e7e7e;"></div>
<div class="t" style="left:1026.20px;top:629.00px;font-size:13px;line-height:1;transform:scaleX(0.8301);transform-origin:0 0;color:#737373;">1.00</div>
<div class="a" style="left:840px;top:659px;width:394px;height:21px;background:#1f1f1f;"></div>
<svg style="left:844.4px;top:668.3px;" width="8" height="5" viewBox="0 0 8 5"><path d="M0 0H8L4 4.600Z" fill="#c8c8c8"/></svg>
<div class="t" style="left:862.50px;top:664.75px;font-size:12.5px;line-height:1;transform:scaleX(0.7934);transform-origin:0 0;color:#fff;">TEXT EXTRAS</div>
<div class="a" style="left:840px;top:680px;width:394px;height:23px;overflow:hidden">
<div class="a" style="left:129px;top:10px;width:216px;height:29px;background:#2e2f30;border:1px solid #1f1f20"></div>
<div class="t" style="left:25.500px;top:18.500px;font-size:13px;line-height:1;color:#f2f2f2">Wrap mode</div>
<div class="t" style="left:135.400px;top:18.500px;font-size:13px;line-height:1;color:#f2f2f2">No Wrap</div>
<svg style="left:324px;top:21px" width="13" height="8" viewBox="0 0 13 8"><path d="M0.500 0.700L6.300 6.700L12.100 0.700" stroke="#fff" stroke-width="1.500" fill="none"/></svg>
</div>
<div class="a" style="left:40px;top:703px;width:1204px;height:27px;background:#1f1f1f;"></div>
<svg style="left:48px;top:712.3px;" width="12" height="11" viewBox="0 0 12 11"><rect x="0.500" y="0.500" width="10.500" height="9.500" fill="none" stroke="#6e6e6e" stroke-width="1"/><rect x="0" y="0" width="5" height="10.500" fill="#6e6e6e"/></svg>
<div class="a" style="left:72px;top:707px;width:201px;height:21px;background:#28292a;"></div>
<svg style="left:78.5px;top:710.5px;" width="15" height="14" viewBox="0 0 15 14"><circle cx="8" cy="5" r="4.300" stroke="#b0b0b0" stroke-width="1.500" fill="none"/><path d="M5 8L0.800 12.300" stroke="#b0b0b0" stroke-width="1.800"/><path d="M9.500 11H13.500L11.500 13Z" fill="#b0b0b0"/></svg>
<div class="t" style="left:99.50px;top:713.00px;font-size:12px;line-height:1;transform:scaleX(0.9824);transform-origin:0 0;color:#7a7a7a;">Type to locate (Ctrl+K)</div>
<div class="a" style="left:275px;top:708px;width:1px;height:20px;background:#5a5a5a;"></div>
<div class="t" style="left:285.80px;top:713.00px;font-size:12px;line-height:1;color:#ececec;">1</div>
<div class="t" style="left:299.80px;top:713.00px;font-size:12px;line-height:1;transform:scaleX(0.8478);transform-origin:0 0;color:#ececec;">Issues</div>
<div class="t" style="left:347.00px;top:713.00px;font-size:12px;line-height:1;color:#ececec;">2</div>
<div class="t" style="left:361.40px;top:713.00px;font-size:12px;line-height:1;transform:scaleX(0.9107);transform-origin:0 0;color:#ececec;">Search Results</div>
<div class="t" style="left:452.90px;top:713.00px;font-size:12px;line-height:1;color:#ececec;">3</div>
<div class="t" style="left:467.30px;top:713.00px;font-size:12px;line-height:1;letter-spacing:0.226px;color:#ececec;">Application Output</div>
<div class="t" style="left:585.90px;top:713.00px;font-size:12px;line-height:1;color:#ececec;">5</div>
<div class="t" style="left:600.30px;top:713.00px;font-size:12px;line-height:1;transform:scaleX(0.9787);transform-origin:0 0;color:#ececec;">QML Debugger Console</div>
<svg style="left:745px;top:712.5px;" width="8" height="11" viewBox="0 0 8 11"><path d="M0 4.2L4 0L8 4.2Z M0 6.6L4 10.8L8 6.6Z" fill="#c8c8c8"/></svg>
<div class="a" style="left:1166px;top:707px;width:24px;height:21px;background:#111112;"></div>
<svg style="left:1170px;top:709.5px;" width="16" height="15" viewBox="0 0 16 15"><path d="M10.800 4H15L12.900 1.600Z" fill="#e0e0e0"/><rect x="1.300" y="6.800" width="13" height="3.600" rx="1.800" fill="#8a8a8a" stroke="#e0e0e0" stroke-width="1.100"/><rect x="10" y="7.600" width="3.600" height="2" fill="#1a1a1a"/></svg>
<svg style="left:1203px;top:712px;" width="12" height="11" viewBox="0 0 12 11"><rect x="0.500" y="0.500" width="10" height="10" fill="none" stroke="#8a8a8a" stroke-width="1"/><rect x="5.800" y="0" width="5.200" height="11" fill="#6e6e6e"/></svg>
<svg style="left:1228px;top:714px;" width="15" height="15" viewBox="0 0 15 15"><path d="M14.500 2L2 14.500M14.500 6L6 14.500M14.500 10L10 14.500" stroke="#3a3a3a" stroke-width="1"/></svg>
<svg width="0" height="0" style="left:0;top:0"><defs><g id="hand"><g fill="#000" stroke="#8a8a8a" stroke-width="0.5" paint-order="stroke"><rect x="4.94" y="-0.06" width="4.12" height="1.12"/><rect x="4.94" y="0.94" width="4.12" height="1.12"/><rect x="4.94" y="1.94" width="4.12" height="1.12"/><rect x="4.94" y="2.94" width="4.12" height="1.12"/><rect x="4.94" y="3.94" width="4.12" height="1.12"/><rect x="4.94" y="4.94" width="6.12" height="1.12"/><rect x="4.94" y="5.94" width="9.12" height="1.12"/><rect x="4.94" y="6.94" width="11.12" height="1.12"/><rect x="-0.06" y="7.94" width="2.12" height="1.12"/><rect x="4.94" y="7.94" width="12.12" height="1.12"/><rect x="-0.06" y="8.94" width="18.12" height="1.12"/><rect x="-0.06" y="9.94" width="18.12" height="1.12"/><rect x="-0.06" y="10.94" width="18.12" height="1.12"/><rect x="0.94" y="11.94" width="17.12" height="1.12"/><rect x="1.94" y="12.94" width="16.12" height="1.12"/><rect x="1.94" y="13.94" width="16.12" height="1.12"/><rect x="2.94" y="14.94" width="15.12" height="1.12"/><rect x="2.94" y="15.94" width="14.12" height="1.12"/><rect x="3.94" y="16.94" width="13.12" height="1.12"/><rect x="3.94" y="17.94" width="12.12" height="1.12"/><rect x="4.94" y="18.94" width="11.12" height="1.12"/><rect x="4.94" y="19.94" width="11.12" height="1.12"/><rect x="4.94" y="20.94" width="11.12" height="1.12"/></g><g fill="#000"><rect x="4.94" y="-0.06" width="4.12" height="1.12"/><rect x="4.94" y="0.94" width="4.12" height="1.12"/><rect x="4.94" y="1.94" width="4.12" height="1.12"/><rect x="4.94" y="2.94" width="4.12" height="1.12"/><rect x="4.94" y="3.94" width="4.12" height="1.12"/><rect x="4.94" y="4.94" width="6.12" height="1.12"/><rect x="4.94" y="5.94" width="9.12" height="1.12"/><rect x="4.94" y="6.94" width="11.12" height="1.12"/><rect x="-0.06" y="7.94" width="2.12" height="1.12"/><rect x="4.94" y="7.94" width="12.12" height="1.12"/><rect x="-0.06" y="8.94" width="18.12" height="1.12"/><rect x="-0.06" y="9.94" width="18.12" height="1.12"/><rect x="-0.06" y="10.94" width="18.12" height="1.12"/><rect x="0.94" y="11.94" width="17.12" height="1.12"/><rect x="1.94" y="12.94" width="16.12" height="1.12"/><rect x="1.94" y="13.94" width="16.12" height="1.12"/><rect x="2.94" y="14.94" width="15.12" height="1.12"/><rect x="2.94" y="15.94" width="14.12" height="1.12"/><rect x="3.94" y="16.94" width="13.12" height="1.12"/><rect x="3.94" y="17.94" width="12.12" height="1.12"/><rect x="4.94" y="18.94" width="11.12" height="1.12"/><rect x="4.94" y="19.94" width="11.12" height="1.12"/><rect x="4.94" y="20.94" width="11.12" height="1.12"/></g><g fill="#fff"><rect x="5.83" y="0.83" width="2.34" height="1.34"/><rect x="5.83" y="1.83" width="2.34" height="1.34"/><rect x="5.83" y="2.83" width="2.34" height="1.34"/><rect x="5.83" y="3.83" width="2.34" height="1.34"/><rect x="5.83" y="4.83" width="2.34" height="1.34"/><rect x="5.83" y="5.83" width="2.34" height="1.34"/><rect x="8.83" y="5.83" width="2.34" height="1.34"/><rect x="5.83" y="6.83" width="2.34" height="1.34"/><rect x="8.83" y="6.83" width="2.34" height="1.34"/><rect x="11.83" y="6.83" width="2.34" height="1.34"/><rect x="5.83" y="7.83" width="2.34" height="1.34"/><rect x="8.83" y="7.83" width="2.34" height="1.34"/><rect x="11.83" y="7.83" width="2.34" height="1.34"/><rect x="14.83" y="7.83" width="1.34" height="1.34"/><rect x="0.83" y="8.83" width="1.34" height="1.34"/><rect x="5.83" y="8.83" width="2.34" height="1.34"/><rect x="8.83" y="8.83" width="2.34" height="1.34"/><rect x="11.83" y="8.83" width="2.34" height="1.34"/><rect x="14.83" y="8.83" width="2.34" height="1.34"/><rect x="0.83" y="9.83" width="4.34" height="1.34"/><rect x="5.83" y="9.83" width="8.34" height="1.34"/><rect x="14.83" y="9.83" width="2.34" height="1.34"/><rect x="0.83" y="10.83" width="4.34" height="1.34"/><rect x="5.83" y="10.83" width="11.34" height="1.34"/><rect x="1.83" y="11.83" width="3.34" height="1.34"/><rect x="5.83" y="11.83" width="11.34" height="1.34"/><rect x="2.83" y="12.83" width="2.34" height="1.34"/><rect x="5.83" y="12.83" width="11.34" height="1.34"/><rect x="2.83" y="13.83" width="14.34" height="1.34"/><rect x="3.83" y="14.83" width="13.34" height="1.34"/><rect x="3.83" y="15.83" width="12.34" height="1.34"/><rect x="4.83" y="16.83" width="11.34" height="1.34"/><rect x="4.83" y="17.83" width="10.34" height="1.34"/><rect x="5.83" y="18.83" width="9.34" height="1.34"/><rect x="5.83" y="19.83" width="9.34" height="1.34"/></g></g></defs></svg>
<svg style="left:0;top:0;pointer-events:none;filter:drop-shadow(1px 1.500px 1.200px rgba(0,0,0,.5))" width="1245" height="731" viewBox="0 0 1245 731"><g transform="translate(838.4 260.1) rotate(45) scale(3.55 3.705) translate(-5 0)"><use href="#hand"/></g></svg>
<svg style="left:0;top:0;pointer-events:none;filter:drop-shadow(1px 1.500px 1.200px rgba(0,0,0,.5))" width="1245" height="731" viewBox="0 0 1245 731"><g transform="translate(837.4 396.1) rotate(45) scale(3.55 3.705) translate(-5 0)"><use href="#hand"/></g></svg>
<div class="a" style="left:0px;top:0px;width:1245px;height:1px;background:linear-gradient(90deg,#0d4c70,#06365a 50%,#0e2c58);"></div>
<div class="a" style="left:0px;top:1px;width:1px;height:730px;background:#185a7c;"></div>
<div class="a" style="left:1244px;top:1px;width:1px;height:730px;background:#1b3a68;"></div>
<div class="a" style="left:0px;top:730px;width:1245px;height:1px;background:linear-gradient(90deg,#185c7e,#1b3a68);"></div>
</body></html>
